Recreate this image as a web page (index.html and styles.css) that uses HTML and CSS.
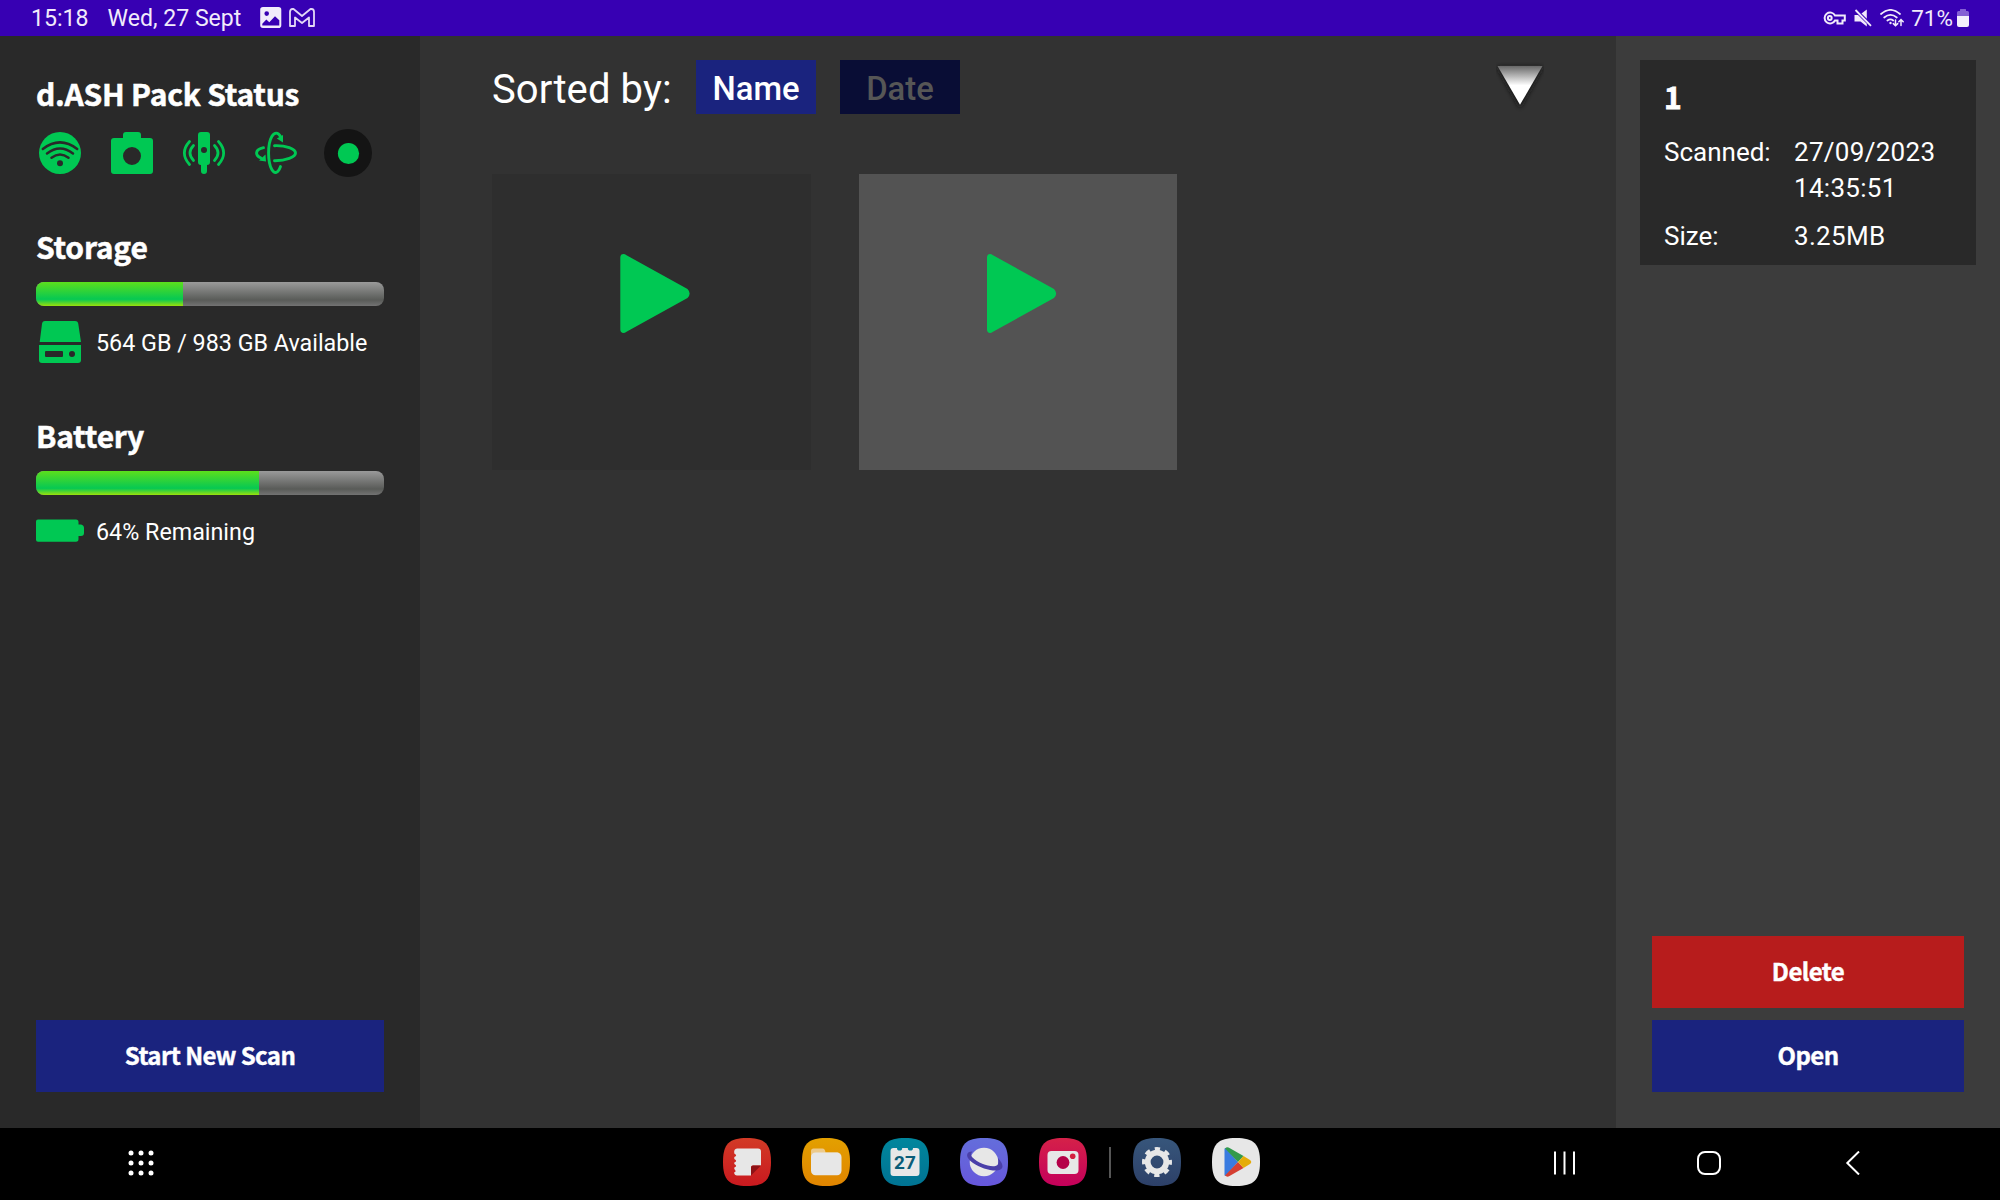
FILE: index.html
```html
<!DOCTYPE html>
<html lang="en">
<head>
<meta charset="utf-8">
<title>d.ASH Pack</title>
<link rel="stylesheet" href="styles.css">
</head>
<body>
<header class="statusbar">
  <div class="statusbar-group">
    <span class="clock">15:18</span>
    <span class="today">Wed, 27 Sept</span>
    <svg class="icon-picture" width="22" height="22" viewBox="0 0 22 22"><path fill="#f1ebfb" fill-rule="evenodd" d="M3 0H18.500a2.800 2.800 0 0 1 2.800 2.800V18.200a2.800 2.800 0 0 1-2.800 2.800H3A2.800 2.800 0 0 1 .2 18.200V2.800A2.800 2.800 0 0 1 3 0ZM6.700 4.300a2.300 2.300 0 1 0 0 4.600a2.300 2.300 0 0 0 0-4.600ZM2.300 16.800V18.500H19.300V13.200L15 9.200L9.300 15.200L6.300 12.500Z"/></svg>
    <svg class="icon-mail" width="26" height="20" viewBox="0 0 26 20"><path fill="none" stroke="#e3d8f6" stroke-width="1.800" stroke-linejoin="round" d="M1 4Q1 1 3.500 1H4.500L13 8L21.500 1H22.500Q25 1 25 4V18H20V9.500L13 15L6 9.500V18H1Z"/></svg>
  </div>
  <div class="statusbar-group">
    <svg class="icon-key" width="23" height="14" viewBox="0 0 23 14"><g fill="none" stroke="#f1ebfb" stroke-width="2"><path d="M12 4.500A5.500 5.500 0 1 0 12 9.500H14.500V12.500H19.500V9.500H21.800V4.500Z"/><circle cx="6.800" cy="7" r="1.900"/></g></svg>
    <svg class="icon-mute" width="18" height="18" viewBox="0 0 18 18"><path fill="#f1ebfb" d="M.5 6H4L12.800 14.800V17.500L6.500 12.500H.5ZM7.500 4.500L12.800.5V9.800Z"/><path stroke="#f1ebfb" stroke-width="1.800" d="M1.500 1L17 16.800"/></svg>
    <svg class="icon-signal" width="24" height="18" viewBox="0 0 24 18"><g fill="none" stroke="#f1ebfb" stroke-width="1.700" stroke-linecap="round"><path d="M1 5Q10.500-3.300 20 5M4.200 8.500Q10.500 3.200 16.800 8.500M7.400 11.500Q10.500 9.200 13.200 11.500"/><path d="M15.500 11V16.500M13.300 14.600L15.500 16.800L17.700 14.600M21 16.500V11M18.800 12.800L21 10.600L23.200 12.800" stroke-width="1.500"/></g><circle cx="10.500" cy="14" r="1.200" fill="#f1ebfb"/></svg>
    <span class="charge">71%</span>
    <svg class="icon-cell" width="12" height="18" viewBox="0 0 12 18"><path fill="#8460d4" d="M3 .5Q3 0 3.500 0H8.500Q9 0 9 .5V2H10.500Q12 2 12 3.500V8H0V3.500Q0 2 1.500 2H3Z"/><path fill="#f3effc" d="M0 7H12V16Q12 18 10 18H2Q0 18 0 16Z"/></svg>
  </div>
</header>

<main class="app">
  <aside class="sidebar">
    <h2 class="title status-title">d.ASH Pack Status</h2>
    <div class="sensors">
      <svg width="48" height="48" viewBox="0 0 48 48"><circle cx="24" cy="24" r="21" fill="#00c853"/><path fill="none" stroke="#292929" stroke-width="2.500" stroke-linecap="round" d="M6.800 20Q24 6.700 41.200 20M11 24.500Q24 14.500 37 24.500M15.500 28.800Q24 22.300 32.500 28.800"/><circle cx="24" cy="34.300" r="3" fill="#292929"/></svg>
      <svg width="48" height="48" viewBox="0 0 48 48"><path fill="#00c853" fill-rule="evenodd" d="M18 3H30Q33 3 33 6V9H42Q45 9 45 12V42Q45 45 42 45H6Q3 45 3 42V12Q3 9 6 9H15V6Q15 3 18 3ZM24 18a9 9 0 1 0 0 18a9 9 0 0 0 0-18Z"/></svg>
      <svg width="48" height="48" viewBox="0 0 48 48"><path fill="#00c853" fill-rule="evenodd" d="M21 3H27Q30 3 30 6V33Q30 36 27 36V42Q27 45 24 45Q21 45 21 42V36Q18 36 18 33V6Q18 3 21 3ZM24 18a3 3 0 1 0 0 6a3 3 0 0 0 0-6Z"/><path fill="none" stroke="#00c853" stroke-width="2.700" stroke-linecap="round" d="M9.500 12.500Q-.8 24 9.500 35.500M13.500 16.500Q6.500 24 13.500 31.500M38.500 12.500Q48.800 24 38.500 35.500M34.500 16.500Q41.500 24 34.500 31.500"/></svg>
      <svg width="48" height="48" viewBox="0 0 48 48"><g fill="none" stroke="#00c853" stroke-width="2.900" stroke-linecap="round"><path d="M28.500 7.500C26 3 22.500 3 19.800 7.500C15.500 15 15.500 33 19.800 40.500C22.500 45 26 44.500 28.500 37.500"/><path d="M22.500 16.700C34 16.300 43.500 20 43.500 24C43.500 28 34 31.800 22.500 31.700M11.500 18.700C3 20.500 2.500 26 9 29"/></g><path fill="#00c853" d="M24.800 9.500L31 6L31 13.500ZM13.500 25.500L14 32.500L7 31.500Z"/></svg>
      <svg width="48" height="48" viewBox="0 0 48 48"><circle cx="24" cy="24" r="24" fill="#141414"/><circle cx="24.500" cy="24.500" r="10.600" fill="#00c853"/></svg>
    </div>

    <h2 class="title">Storage</h2>
    <div class="meter"><div class="meter-fill" style="width:147px"></div></div>
    <div class="reading">
      <svg width="48" height="48" viewBox="0 0 48 48"><path fill="#00c853" d="M9 3H39Q42 3 42.300 6L45 24H3.700L6 6Q6.300 3 9 3Z"/><path fill="#00c853" fill-rule="evenodd" d="M3 27H45V42Q45 45 42 45H6Q3 45 3 42ZM10 33Q9 33 9 34V38Q9 39 10 39H26Q27 39 27 38V34Q27 33 26 33ZM36 33a3 3 0 1 0 0 6a3 3 0 0 0 0-6Z"/></svg>
      <span class="reading-text">564 GB / 983 GB Available</span>
    </div>

    <h2 class="title">Battery</h2>
    <div class="meter"><div class="meter-fill" style="width:223px"></div></div>
    <div class="reading">
      <svg width="48" height="48" viewBox="0 0 48 48"><path fill="#00c853" d="M2 12.500H40Q42.500 12.500 42.500 15V17.500H45Q48 18 48 21V26Q48 29 45 29H42.500V32Q42.500 34.700 40 34.700H2Q0 34.700 0 32.700V14.500Q0 12.500 2 12.500Z"/></svg>
      <span class="reading-text">64% Remaining</span>
    </div>
    <button class="button start">Start New Scan</button>
  </aside>

  <section class="browser">
    <div class="sortbar">
      <span class="sort-label">Sorted by:</span>
      <button class="sort active">Name</button>
      <button class="sort inactive">Date</button>
      <svg class="sort-arrow" width="48" height="54" viewBox="0 0 48 54"><defs><linearGradient id="arrow" x1="0" y1="0" x2="0" y2="1"><stop offset="0" stop-color="#686868"/><stop offset=".5" stop-color="#fff"/></linearGradient><filter id="shade" x="-20%" y="-20%" width="140%" height="150%"><feGaussianBlur stdDeviation="2.500"/></filter></defs><path d="M1 7H47L24 48Z" fill="#151515" filter="url(#shade)"/><path d="M1.500 6H46.500L24 44.800Z" fill="url(#arrow)"/></svg>
    </div>
    <div class="tiles">
      <div class="tile"><svg width="70" height="80" viewBox="0 0 70 80"><path fill="#00c853" d="M.3 3.500C.3 0 3.500-1 6.500 1.200L67.500 35Q71.800 39.500 67.500 44L6.500 77.800C3.500 80 .3 79 .3 75.500Z"/></svg></div>
      <div class="tile selected"><svg width="70" height="80" viewBox="0 0 70 80"><path fill="#00c853" d="M0 3.500C0 0 3-1 6 1.200L67 35Q71.300 39.500 67 44L6 77.800C3 80 0 79 0 75.500Z"/></svg></div>
    </div>
  </section>

  <aside class="details">
    <div class="card">
      <h2 class="card-title">1</h2>
      <dl class="facts">
        <dt>Scanned:</dt><dd>27/09/2023<br>14:35:51</dd>
        <dt>Size:</dt><dd>3.25MB</dd>
      </dl>
    </div>
    <div class="actions">
      <button class="button delete">Delete</button>
      <button class="button">Open</button>
    </div>
  </aside>
</main>

<nav class="dock">
  <svg class="drawer" width="26" height="26" viewBox="0 0 26 26"><g fill="#fff"><circle cx="3" cy="3" r="2.500"/><circle cx="13" cy="3" r="2.500"/><circle cx="23" cy="3" r="2.500"/><circle cx="3" cy="13" r="2.500"/><circle cx="13" cy="13" r="2.500"/><circle cx="23" cy="13" r="2.500"/><circle cx="3" cy="23" r="2.500"/><circle cx="13" cy="23" r="2.500"/><circle cx="23" cy="23" r="2.500"/></g></svg>
  <div class="apps">
    <svg width="48" height="48" viewBox="0 0 48 48"><defs><linearGradient id="g1" x1="0" y1="0" x2="0" y2="1"><stop stop-color="#d23a26"/><stop offset="1" stop-color="#c9191f"/></linearGradient></defs><path fill="url(#g1)" d="M24 0C42 0 48 6 48 24S42 48 24 48S0 42 0 24S6 0 24 0Z"/><path fill="#e7e7e7" d="M14 10.500H35Q38 10.500 38 13.500V27.500H30Q28 27.500 28 29.500V37.500H14Q11.500 37.500 11 34.500Q14 33.500 11.300 31V29.500Q15 28 11.300 26V24.500Q15 23 11.300 21V19Q15 17.500 11.300 15.500Q10.500 11 14 10.500Z"/><path fill="#8f1216" d="M38 27.500L28 37.500V29.500Q28 27.500 30 27.500Z"/></svg>
    <svg width="48" height="48" viewBox="0 0 48 48"><defs><linearGradient id="g2" x1="0" y1="0" x2="0" y2="1"><stop stop-color="#e3a000"/><stop offset="1" stop-color="#e08400"/></linearGradient></defs><path fill="url(#g2)" d="M24 0C42 0 48 6 48 24S42 48 24 48S0 42 0 24S6 0 24 0Z"/><path fill="#ecca8c" d="M9 18V13Q9 10.500 11.500 10.500H20.500Q23 10.500 23.500 14.500H36V20H9Z"/><rect x="9" y="14.500" width="30.500" height="22.800" rx="4.500" fill="#e7e7e7"/></svg>
    <svg width="48" height="48" viewBox="0 0 48 48"><defs><linearGradient id="g3" x1="0" y1="0" x2="0" y2="1"><stop stop-color="#00869d"/><stop offset="1" stop-color="#007393"/></linearGradient></defs><path fill="url(#g3)" d="M24 0C42 0 48 6 48 24S42 48 24 48S0 42 0 24S6 0 24 0Z"/><path fill="#e7e7e7" d="M12.500 10H16A2.600 2.600 0 0 0 21.200 10H26.800A2.600 2.600 0 0 0 32 10H35.500Q38.500 10 38.500 13V35Q38.500 38 35.500 38H12.500Q9.500 38 9.500 35V13Q9.500 10 12.500 10Z"/><text class="calendar-day" x="24" y="31" text-anchor="middle">27</text></svg>
    <svg width="48" height="48" viewBox="0 0 48 48"><defs><linearGradient id="g4" x1="0" y1="0" x2="0" y2="1"><stop stop-color="#646edb"/><stop offset="1" stop-color="#6757db"/></linearGradient></defs><path fill="url(#g4)" d="M24 0C42 0 48 6 48 24S42 48 24 48S0 42 0 24S6 0 24 0Z"/><circle cx="24" cy="24" r="14.300" fill="#e7e7e7"/><path fill="#4a3fa9" d="M12.500 13.500C5 13.500 5.500 20 13 25C23 32 42 36 42.500 28.500Q42.500 25 38 20Q39.500 27 35.500 28C30 29.500 18 25 12.500 19.500Q9.500 16.500 12.500 13.500Z"/></svg>
    <svg width="48" height="48" viewBox="0 0 48 48"><defs><linearGradient id="g5" x1="0" y1="0" x2="0" y2="1"><stop stop-color="#d52149"/><stop offset="1" stop-color="#c4005b"/></linearGradient></defs><path fill="url(#g5)" d="M24 0C42 0 48 6 48 24S42 48 24 48S0 42 0 24S6 0 24 0Z"/><rect x="8.500" y="13" width="31" height="23" rx="4" fill="#e7e7e7"/><circle cx="24" cy="24.500" r="6.400" fill="#b50048"/><circle cx="33.700" cy="18.300" r="2.800" fill="#d4203f"/></svg>
    <span class="divider"></span>
    <svg width="48" height="48" viewBox="0 0 48 48"><defs><linearGradient id="g6" x1="0" y1="0" x2="0" y2="1"><stop stop-color="#37567b"/><stop offset="1" stop-color="#2d4068"/></linearGradient></defs><path fill="url(#g6)" d="M24 0C42 0 48 6 48 24S42 48 24 48S0 42 0 24S6 0 24 0Z"/><circle cx="24" cy="24" r="9.300" fill="none" stroke="#e7e7e7" stroke-width="5.800"/><circle cx="24" cy="24" r="13" fill="none" stroke="#e7e7e7" stroke-width="4" stroke-dasharray="5.200 5.010" stroke-dashoffset="2.600"/></svg>
    <svg width="48" height="48" viewBox="0 0 48 48"><path fill="#e7e7e7" d="M24 0C42 0 48 6 48 24S42 48 24 48S0 42 0 24S6 0 24 0Z"/><path fill="#397be0" d="M12.500 11Q12.500 10 13.500 10L26 24L13.500 38Q12.500 38 12.500 37Z"/><path fill="#329a4c" d="M13 10.500Q15 8.500 17.500 10L31.500 18L26 24Z"/><path fill="#d53f32" d="M13 37.500Q15 39.500 17.500 38L31.500 30L26 24Z"/><path fill="#e5ac0a" d="M31.500 18L38 22Q40.500 24 38 26L31.500 30L26 24Z"/></svg>
  </div>
  <div class="keys">
    <svg width="24" height="24" viewBox="0 0 24 24"><path stroke="#fff" stroke-width="2" d="M2 .5V23.500M11.500 .5V23.500M21 .5V23.500"/></svg>
    <svg width="24" height="24" viewBox="0 0 24 24"><rect x="1" y="1" width="22" height="22" rx="7" fill="none" stroke="#fff" stroke-width="2"/></svg>
    <svg width="24" height="24" viewBox="0 0 24 24"><path fill="none" stroke="#fff" stroke-width="2" d="M18 .5L6.300 12L18 23.500"/></svg>
  </div>
</nav>
</body>
</html>
```
FILE: styles.css
```css
* { box-sizing: border-box; margin: 0; padding: 0; }
body { width: 2000px; height: 1200px; overflow: hidden; display: flex; flex-direction: column; background: #000; color: #fff; font-family: Roboto, sans-serif; }
svg { display: block; flex: none; }
button { border: 0; color: #fff; }

.statusbar { height: 36px; flex: none; display: flex; justify-content: space-between; padding: 0 31px; background: #3700b3; color: #f1ebfb; font-size: 23.100px; line-height: 36px; }
.statusbar-group { display: flex; align-items: center; }
.clock, .today { height: 36px; line-height: 38px; }
.today { margin-left: 19px; }
.icon-picture { margin-left: 19px; }
.icon-mail { margin-left: 7px; }
.icon-mute { margin-left: 8px; }
.icon-signal { margin-left: 8px; }
.charge { margin-left: 7px; font-size: 22.500px; }
.icon-cell { margin-left: 4px; }

.app { height: 1092px; flex: none; display: grid; grid-template-columns: 420px 1196px 384px; }

.sidebar { display: flex; flex-direction: column; padding: 33px 36px 36px; background: #292929; }
.title { height: 48px; font: 700 30px/48px "Noto Sans CJK SC", sans-serif; letter-spacing: -.24px; -webkit-text-stroke: .5px #fff; }
.status-title { margin-bottom: 3px; }
.sensors { display: flex; gap: 24px; margin: 9px 0 45px; }
.meter { height: 24px; margin-top: 12px; border-radius: 8px; overflow: hidden; background: linear-gradient(#9a9a9a, #595b58 75%, #737373); }
.meter-fill { height: 100%; background: linear-gradient(#5cdf1c, #06c853 72%, #9be00c); }
.reading { display: flex; align-items: center; gap: 12px; height: 48px; margin: 12px 0 45px; font-size: 23.300px; }
.reading-text { padding-top: 2px; }
.button { height: 72px; padding-bottom: 2px; background: #1a237e; font: 700 24px/70px "Noto Sans CJK SC", sans-serif; letter-spacing: -.6px; -webkit-text-stroke: .4px #fff; }
.start { margin-top: auto; }

.browser { padding: 24px 72px; background: #323232; }
.sortbar { display: flex; align-items: center; gap: 24px; height: 54px; }
.sort-label { width: 180px; padding-top: 4px; font-size: 40px; letter-spacing: .1px; white-space: nowrap; }
.sort { width: 120px; height: 54px; padding-top: 4px; background: #1a237e; font: 500 32.800px/50px Roboto, sans-serif; }
.inactive { background: #090d35; color: #565656; }
.sort-arrow { margin-left: auto; }
.tiles { display: grid; grid-template-columns: repeat(3, 1fr); gap: 48px; margin-top: 60px; }
.tile { height: 296px; display: flex; padding: 80px 0 0 128px; background: #2e2e2e; }
.selected { background: #535353; }

.details { display: flex; flex-direction: column; justify-content: space-between; padding: 24px 24px 36px; background: #3c3c3c; }
.card { height: 205px; padding: 12px 24px; background: #292929; }
.card-title { font: 700 30px/48px "Noto Sans CJK SC", sans-serif; -webkit-text-stroke: .8px #fff; }
.facts { display: grid; grid-template-columns: 130px 1fr; row-gap: 12px; margin-top: 14px; font-size: 26px; line-height: 36px; }
.facts dd { letter-spacing: .3px; }
.actions { display: flex; flex-direction: column; gap: 12px; padding: 0 12px; }
.delete { background: #b71c1c; }

.dock { flex: 1; display: grid; grid-template-columns: 723.300px 1fr 446.700px; align-items: start; background: #000; }
.drawer { margin: 22px 0 0 128px; }
.apps { display: flex; align-items: center; gap: 31px; margin-top: 10.400px; }
.divider { width: 2px; height: 31px; background: #565656; margin: 0 -9px; }
.calendar-day { font: 700 19px Roboto, sans-serif; fill: #0a5c78; }
.keys { display: flex; gap: 120px; margin-top: 23px; }
```
